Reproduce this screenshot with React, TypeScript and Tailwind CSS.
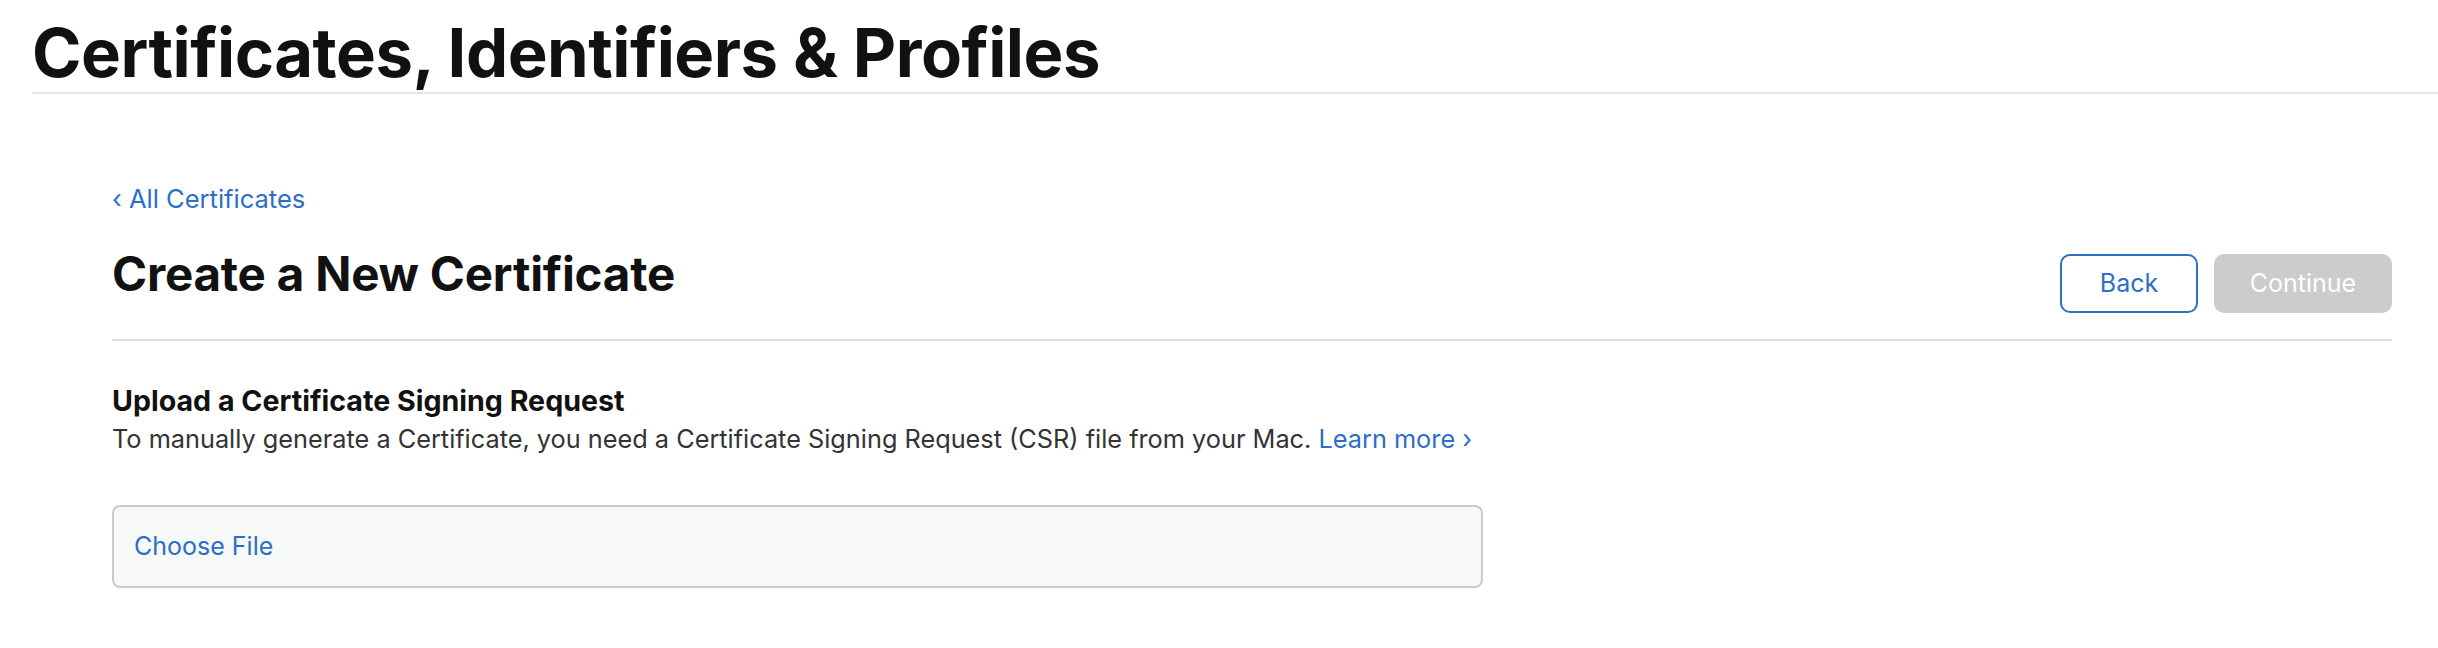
export default function App() {
  return (
    <div className="w-[2438px] h-[648px] bg-white text-[#111111] font-['Inter',sans-serif] overflow-hidden">
      <header className="pl-[32px]">
        <h1 className="pt-[13px] text-[67px] font-bold leading-[79px] tracking-[-0.5px] border-b-2 border-[#e5e5e5]">
          Certificates, Identifiers &amp; Profiles
        </h1>
      </header>

      <main className="pl-[112px] pr-[46px]">
        <a href="#" className="mt-[90px] block text-[25.5px] leading-[30px] text-[#2d6ec6]">
          ‹ All Certificates
        </a>

        <div className="mt-[22px] flex items-start justify-between border-b-2 border-[#dcdcdc] pb-[26px]">
          <h2 className="mt-[8px] text-[47.5px] font-bold leading-[60px] tracking-[-0.2px]">
            Create a New Certificate
          </h2>
          <div className="mt-[18px] flex gap-[16px]">
            <button className="w-[138px] h-[59px] rounded-[10px] border-2 border-[#2d6ec6] text-[25px] text-[#2d6ec6] bg-white">
              Back
            </button>
            <button className="w-[178px] h-[59px] rounded-[10px] bg-[#cccccc] text-[25px] text-white">
              Continue
            </button>
          </div>
        </div>

        <section className="mt-[42px]">
          <h3 className="text-[28.6px] font-bold leading-[36px]">Upload a Certificate Signing Request</h3>
          <p className="text-[25.3px] leading-[40px] text-[#333333]">
            To manually generate a Certificate, you need a Certificate Signing Request (CSR) file from your Mac.{" "}
            <a href="#" className="text-[#2d6ec6]">Learn more ›</a>
          </p>

          <div className="mt-[46px] w-[1371px] h-[83px] rounded-[8px] border-2 border-[#cacaca] bg-[#f7f8f8] flex items-center px-[20px]">
            <span className="text-[25px] text-[#2d6ec6]">Choose File</span>
          </div>
        </section>
      </main>
    </div>
  );
}
